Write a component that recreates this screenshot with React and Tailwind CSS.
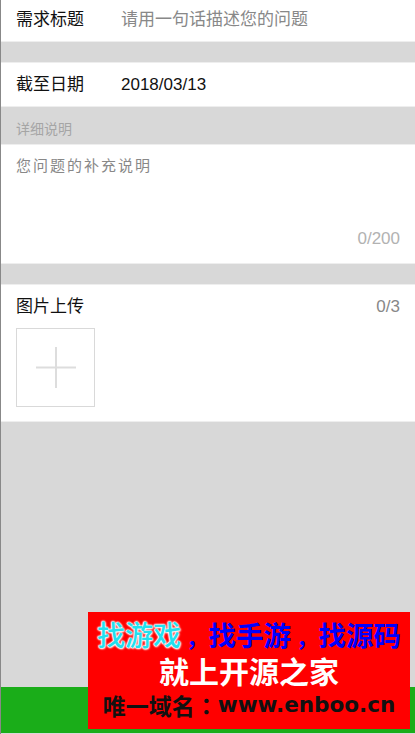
import React from "react";

const sans = "font-['Liberation_Sans','Noto_Sans_CJK_SC',sans-serif]";

const App = () => {
  return (
    <div className={`relative h-[734px] w-full overflow-hidden border-l border-[#888888] bg-[#d8d8d8] ${sans}`}>
      {/* Title */}
      <div className="flex h-[42px] items-center border-b border-[#eeeeee] bg-white pl-[15px] pb-[2px] text-[17px]">
        <span className="w-[105px] text-[#111111]">需求标题</span>
        <span className="text-[#888888]">请用一句话描述您的问题</span>
      </div>

      <div className="h-[20px]" />

      {/* Deadline */}
      <div className="flex h-[45px] items-center border-t border-b border-[#eeeeee] bg-white pl-[15px] text-[17px]">
        <span className="w-[105px] text-[#111111]">截至日期</span>
        <span className="text-[#111111]">2018/03/13</span>
      </div>

      {/* Description */}
      <div className="flex h-[37px] items-center pl-[15px] pt-[7px] text-[14px] text-[#a5a5a5]">详细说明</div>
      <div className="flex h-[120px] flex-col justify-between border-t border-b border-[#eeeeee] bg-white px-[15px] pt-[10px] pb-[12px]">
        <span className="text-[15px] tracking-[2px] text-[#888888]">您问题的补充说明</span>
        <span className="self-end text-[17px] text-[#b2b2b2]">0/200</span>
      </div>

      <div className="h-[20px]" />

      {/* Upload */}
      <div className="border-t border-b border-[#eeeeee] bg-white px-[15px] pt-[9px] pb-[14px]">
        <div className="flex h-[24px] items-center justify-between text-[17px] leading-none">
          <span className="text-[#111111]">图片上传</span>
          <span className="text-[#888888]">0/3</span>
        </div>
        <div className="mt-[10px] flex h-[79px] w-[79px] items-center justify-center border border-[#d9d9d9]">
          <svg width="40" height="41" viewBox="0 0 40 41">
            <path d="M0 20.5H40M20 0V41" stroke="#dddddd" strokeWidth="2" fill="none" />
          </svg>
        </div>
      </div>

      {/* Submit bar */}
      <div className="absolute bottom-[1px] left-0 right-0 h-[46px] bg-[#1aad19]" />

      {/* Watermark */}
      <div className="absolute left-[87px] top-[612px] flex h-[117px] w-[322px] flex-col items-center bg-[#ff0000] font-['Noto_Sans_CJK_SC',sans-serif] font-bold">
        <div className="mt-[4px] h-[36px] whitespace-nowrap text-[27.5px] leading-[36px]">
          <span className="text-[28px] font-medium text-[#22e0ee] [text-shadow:0_0_1px_#ffffff,0_0_2px_#ffffff,0_0_2px_#ffffff,0_0_2px_#ffffff,1px_1px_2px_#ffffff]">找游戏</span>
          <span className="ml-[5px] mr-[0.5px] text-[22px] text-[#0000ff]">，</span>
          <span className="text-[#0000ff]">找手游</span>
          <span className="ml-[5px] mr-[0.5px] text-[22px] text-[#0000ff]">，</span>
          <span className="text-[#0000ff]">找源码</span>
        </div>
        <div className="flex h-[36px] items-center text-[30px] leading-none text-white">就上开源之家</div>
        <div className="flex h-[34px] items-center text-[23px] leading-none text-[#111111]">
          <span>唯一域名</span>
          <span className="font-['Noto_Sans_CJK_TC',sans-serif]">：</span>
          <span className="font-['DejaVu_Sans',sans-serif] text-[21.5px]">www.enboo.cn</span>
        </div>
      </div>
    </div>
  );
};

export default App;
